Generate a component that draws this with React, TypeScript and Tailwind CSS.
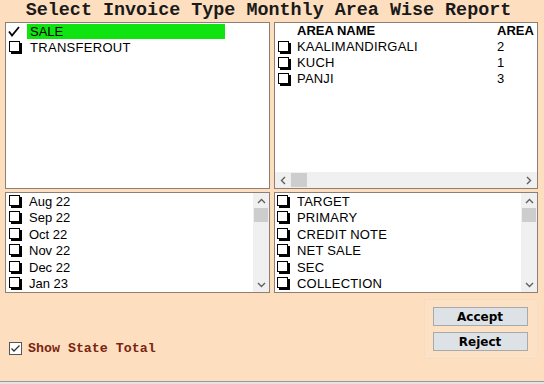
import React from "react";

const Box = () => (
  <svg width="13" height="13" viewBox="0 0 13 13" className="shrink-0">
    <rect x="0.5" y="0.5" width="10" height="10" fill="#fff" stroke="#000" />
    <rect x="10" y="2" width="3" height="11" fill="#000" />
    <rect x="2" y="10" width="11" height="3" fill="#000" />
  </svg>
);

const Up = () => (
  <svg width="9" height="6" viewBox="0 0 9 6"><path d="M1 5 L4.5 1.5 L8 5" fill="none" stroke="#606060" strokeWidth="1.4" /></svg>
);
const Down = () => (
  <svg width="9" height="6" viewBox="0 0 9 6"><path d="M1 1 L4.5 4.5 L8 1" fill="none" stroke="#606060" strokeWidth="1.4" /></svg>
);
const Left = () => (
  <svg width="6" height="9" viewBox="0 0 6 9"><path d="M5 1 L1.5 4.5 L5 8" fill="none" stroke="#606060" strokeWidth="1.4" /></svg>
);
const Right = () => (
  <svg width="6" height="9" viewBox="0 0 6 9"><path d="M1 1 L4.5 4.5 L1 8" fill="none" stroke="#606060" strokeWidth="1.4" /></svg>
);

const VScroll = () => (
  <div className="w-[16px] shrink-0 bg-[#f0f0f0] flex flex-col">
    <div className="h-[15px] flex items-center justify-center"><Up /></div>
    <div className="h-[14px] mx-[1px] bg-[#cdcdcd]" />
    <div className="flex-1" />
    <div className="h-[15px] flex items-center justify-center"><Down /></div>
  </div>
);

const font = { fontFamily: '"Liberation Sans", Arial, sans-serif' };

const months = ["Aug 22", "Sep 22", "Oct 22", "Nov 22", "Dec 22", "Jan 23"];
const types = ["TARGET", "PRIMARY", "CREDIT NOTE", "NET SALE", "SEC", "COLLECTION"];
const areas: [string, string][] = [["KAALIMANDIRGALI", "2"], ["KUCH", "1"], ["PANJI", "3"]];

export default function App() {
  return (
    <div className="w-[544px] h-[384px] bg-[#fddfc0] flex flex-col overflow-hidden relative text-black" style={font}>
      <div className="h-[22px] flex items-center justify-center pr-[7px]">
        <span className="text-[18.4px] font-bold text-[#1a1a1a] leading-none" style={{ fontFamily: '"Liberation Mono", "Courier New", monospace' }}>
          Select Invoice Type Monthly Area Wise Report
        </span>
      </div>

      <div className="flex gap-[4px] pl-[5px] pr-[6px] h-[167px]">
        <div className="w-[265px] border border-[#8c8076] bg-white">
          <div className="h-[16px] flex items-center text-[13px]">
            <span className="w-[21px] pl-[2px] flex items-center">
              <svg width="12" height="11" viewBox="0 0 12 11"><path d="M1 5.5 L4 9.5 L11 1" fill="none" stroke="#000" strokeWidth="1.8" /></svg>
            </span>
            <span className="bg-[#10e410] h-[15px] w-[198px] flex items-center pl-[3px] leading-none">SALE</span>
          </div>
          <div className="h-[16px] flex items-center text-[13px]">
            <span className="w-[24px] pl-[3px] flex items-center"><Box /></span>
            <span className="leading-none tracking-[0.3px]">TRANSFEROUT</span>
          </div>
        </div>
        <div className="w-[264px] border border-[#8c8076] bg-white flex flex-col overflow-hidden">
          <div className="flex-1">
            <div className="h-[16px] flex items-center text-[13px] font-bold whitespace-nowrap">
              <span className="w-[22px]" />
              <span className="w-[200px]">AREA NAME</span>
              <span>AREA</span>
            </div>
            {areas.map(([n, c]) => (
              <div key={n} className="h-[16px] flex items-center text-[13px] whitespace-nowrap">
                <span className="w-[22px] pl-[3px] flex items-center"><Box /></span>
                <span className="w-[200px] tracking-[0.2px]">{n}</span>
                <span>{c}</span>
              </div>
            ))}
          </div>
          <div className="h-[16px] bg-[#f0f0f0] flex items-center">
            <div className="w-[16px] flex items-center justify-center"><Left /></div>
            <div className="w-[16px] h-[14px] bg-[#cdcdcd]" />
            <div className="flex-1" />
            <div className="w-[16px] flex items-center justify-center"><Right /></div>
          </div>
        </div>
      </div>

      <div className="flex gap-[4px] pl-[5px] pr-[6px] h-[101px] mt-[3px]">
        <div className="w-[265px] border border-[#8c8076] bg-white flex">
          <div className="flex-1">
            {months.map((m) => (
              <div key={m} className="h-[16.5px] flex items-center text-[13px]">
                <span className="w-[23px] pl-[3px] flex items-center"><Box /></span>
                <span className="leading-none">{m}</span>
              </div>
            ))}
          </div>
          <VScroll />
        </div>
        <div className="w-[264px] border border-[#8c8076] bg-white flex">
          <div className="flex-1">
            {types.map((m) => (
              <div key={m} className="h-[16.5px] flex items-center text-[13px]">
                <span className="w-[22px] pl-[2px] flex items-center"><Box /></span>
                <span className="leading-none tracking-[0.2px]">{m}</span>
              </div>
            ))}
          </div>
          <VScroll />
        </div>
      </div>

      <div className="flex-1 flex pl-[9px] pr-[6px]">
        <div className="flex-1 flex items-start pt-[46px]">
          <div className="flex items-center gap-[6px]">
            <svg width="13" height="13" viewBox="0 0 13 13">
              <rect x="0.5" y="0.5" width="12" height="12" fill="#fff" stroke="#555" />
              <path d="M2.5 6.5 L5 9 L10.5 3.5" fill="none" stroke="#333" strokeWidth="1.3" />
            </svg>
            <span className="text-[13.3px] font-bold text-[#7a2410]" style={{ fontFamily: '"Liberation Mono", "Courier New", monospace' }}>
              Show State Total
            </span>
          </div>
        </div>
        <div className="w-[114px] h-[60px] mt-[6px] border border-[#f6dcc4] bg-[#fde1c4] flex flex-col items-center pt-[7px] gap-[6px] pr-[2px]">
          <div className="w-[95px] h-[19px] bg-[#dde2e6] border border-[#a9a9a9] flex items-center justify-center text-[12px] font-bold leading-none" style={{ fontFamily: '"DejaVu Sans", Tahoma, sans-serif' }}>Accept</div>
          <div className="w-[95px] h-[19px] bg-[#dde2e6] border border-[#a9a9a9] flex items-center justify-center text-[12px] font-bold leading-none" style={{ fontFamily: '"DejaVu Sans", Tahoma, sans-serif' }}>Reject</div>
        </div>
      </div>
      <div className="h-[3px] border-t border-[#9a9a9a] bg-[#e4e4e4]" />
    </div>
  );
}
